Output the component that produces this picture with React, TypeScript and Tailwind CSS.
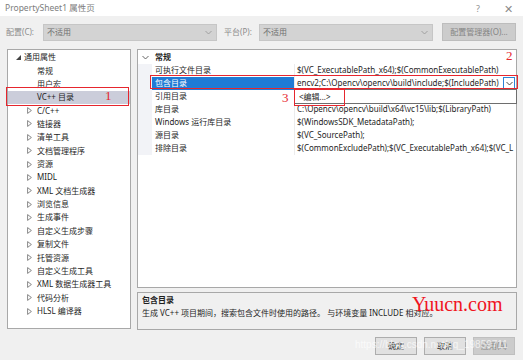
import React from "react";

const font = { fontFamily: "'Noto Sans', 'Noto Sans CJK SC', sans-serif" };

type TreeItem = { label: string; level: 0 | 1; arrow: "open" | "closed" | "none"; selected?: boolean };

const treeItems: TreeItem[] = [
  { label: "通用属性", level: 0, arrow: "open" },
  { label: "常规", level: 1, arrow: "none" },
  { label: "用户宏", level: 1, arrow: "none" },
  { label: "VC++ 目录", level: 1, arrow: "none", selected: true },
  { label: "C/C++", level: 1, arrow: "closed" },
  { label: "链接器", level: 1, arrow: "closed" },
  { label: "清单工具", level: 1, arrow: "closed" },
  { label: "文档管理程序", level: 1, arrow: "closed" },
  { label: "资源", level: 1, arrow: "closed" },
  { label: "MIDL", level: 1, arrow: "closed" },
  { label: "XML 文档生成器", level: 1, arrow: "closed" },
  { label: "浏览信息", level: 1, arrow: "closed" },
  { label: "生成事件", level: 1, arrow: "closed" },
  { label: "自定义生成步骤", level: 1, arrow: "closed" },
  { label: "复制文件", level: 1, arrow: "closed" },
  { label: "托管资源", level: 1, arrow: "closed" },
  { label: "自定义生成工具", level: 1, arrow: "closed" },
  { label: "XML 数据生成器工具", level: 1, arrow: "closed" },
  { label: "代码分析", level: 1, arrow: "closed" },
  { label: "HLSL 编译器", level: 1, arrow: "closed" },
];

// 引用目录's value sits under the open dropdown, so it is left blank here
const props = [
  { name: "可执行文件目录", value: "$(VC_ExecutablePath_x64);$(CommonExecutablePath)" },
  { name: "包含目录", value: "encv2;C:\\Opencv\\opencv\\build\\include;$(IncludePath)", selected: true },
  { name: "引用目录", value: "" },
  { name: "库目录", value: "C:\\Opencv\\opencv\\build\\x64\\vc15\\lib;$(LibraryPath)" },
  { name: "Windows 运行库目录", value: "$(WindowsSDK_MetadataPath);" },
  { name: "源目录", value: "$(VC_SourcePath);" },
  { name: "排除目录", value: "$(CommonExcludePath);$(VC_ExecutablePath_x64);$(VC_L" },
];

const Chevron = ({ color = "#8a8a8a" }: { color?: string }) => (
  <svg width="7" height="5" viewBox="0 0 7 5">
    <path d="M0.5 1 L3.5 4 L6.5 1" fill="none" stroke={color} strokeWidth="0.9" />
  </svg>
);

const App = () => {
  return (
    <div className="relative w-[523px] h-[360px] overflow-hidden bg-[#f0f0f0] text-[8px] leading-none text-[#1e1e1e]" style={font}>
      {/* title bar */}
      <div className="h-[16px] bg-white flex items-center pl-[5px] pr-[10px] text-[#7d7d7d]">
        <span className="text-[8.5px]">PropertySheet1 属性页</span>
        <span className="ml-auto text-[9px] text-[#909090]">?</span>
        <span className="ml-[24px] text-[11px] font-light text-[#8a8a8a]">✕</span>
      </div>

      {/* config row */}
      <div className="mt-[7px] h-[18px] flex items-center text-[#8b8b8b]">
        <span className="ml-[6px] w-[37px]">配置(C):</span>
        <div className="w-[174px] h-[17px] bg-[#d3d3d3] border border-[#c6c6c6] flex items-center pl-[3px] pr-[4px] text-[#6f6f6f]">
          <span>不适用</span>
          <span className="ml-auto"><Chevron color="#9a9a9a" /></span>
        </div>
        <span className="ml-[7px] w-[35px]">平台(P):</span>
        <div className="w-[174px] h-[17px] bg-[#d3d3d3] border border-[#c6c6c6] flex items-center pl-[3px] pr-[4px] text-[#6f6f6f]">
          <span>不适用</span>
          <span className="ml-auto"><Chevron color="#9a9a9a" /></span>
        </div>
        <div className="ml-[9px] w-[74px] h-[18px] bg-[#cccccc] border border-[#bdbdbd] flex items-center justify-center text-[#858585]">
          配置管理器(O)...
        </div>
      </div>

      {/* main area */}
      <div className="mt-[8px] flex h-[281px]">
        {/* tree */}
        <div className="ml-[7px] w-[124px] h-[280px] bg-white border border-[#a8a8a8] pt-[0.5px]">
          {treeItems.map((t) => (
            <div
              key={t.label}
              className={`relative h-[13.37px] flex items-center ${t.selected ? "bg-[#cbcdda]" : ""}`}
            >
              {t.arrow === "open" && (
                <svg className="absolute left-[8px]" width="5" height="5" viewBox="0 0 5 5">
                  <path d="M5 0 L5 5 L0 5 Z" fill="#444" />
                </svg>
              )}
              {t.arrow === "closed" && (
                <svg className="absolute left-[19px]" width="5" height="7" viewBox="0 0 5 7">
                  <path d="M0.6 0.6 L4.4 3.5 L0.6 6.4 Z" fill="none" stroke="#6a6a6a" strokeWidth="0.8" />
                </svg>
              )}
              <span className={t.level === 0 ? "ml-[16px]" : "ml-[29px]"}>{t.label}</span>
            </div>
          ))}
        </div>

        {/* right column */}
        <div className="ml-[6px] w-[380px] flex flex-col gap-[4px]">
          <div className="h-[239px] bg-white border border-[#a8a8a8] overflow-hidden pt-[0.5px]">
            <div className="h-[13px] flex items-center">
              <span className="w-[14px] flex justify-center"><Chevron color="#555" /></span>
              <span className="ml-[3px] font-bold">常规</span>
            </div>
            {props.map((p) => (
              <div key={p.name} className="h-[13px] flex">
                <div className="w-[14px] bg-[#f2f3f7]" />
                <div
                  className={`w-[143px] flex items-center pl-[3px] border-r border-[#ececec] ${
                    p.selected ? "bg-[#1f7bd5] text-white" : ""
                  }`}
                >
                  {p.name}
                </div>
                <div className="flex-1 flex items-center pl-[2px] whitespace-nowrap overflow-hidden">
                  <span>{p.value}</span>
                  {p.selected && (
                    <span className="ml-auto mr-[1px] w-[12px] h-[12px] border border-[#2a84d8] bg-white flex items-center justify-center">
                      <Chevron color="#333" />
                    </span>
                  )}
                </div>
              </div>
            ))}
          </div>

          {/* description */}
          <div className="h-[38px] border border-[#a8a8a8] bg-[#f0f0f0] pl-[4px] pt-[3px] flex flex-col gap-[5px]">
            <span className="font-bold">包含目录</span>
            <span>生成 VC++ 项目期间，搜索包含文件时使用的路径。 与环境变量 INCLUDE 相对应。</span>
          </div>
        </div>
      </div>

      {/* buttons */}
      <div className="mt-[7px] flex justify-end gap-[7px] pr-[8px]">
        <div className="w-[42px] h-[18px] bg-[#e1e1e1] border border-[#adadad] flex items-center justify-center">确定</div>
        <div className="w-[42px] h-[18px] bg-[#e1e1e1] border border-[#adadad] flex items-center justify-center">取消</div>
        <div className="w-[42px] h-[18px] bg-[#cccccc] border border-[#bfbfbf] flex items-center justify-center text-[#8a8a8a]">应用(A)</div>
      </div>

      {/* dropdown list */}
      <div className="absolute left-[294px] top-[89px] w-[223px] h-[15px] bg-white border border-[#6e6e6e] flex items-center pl-[4px]">
        &lt;编辑...&gt;
      </div>

      {/* red annotations */}
      <div className="absolute left-[6px] top-[87px] w-[123px] h-[19px] border-[1.5px] border-[#e6262e]" />
      <span className="absolute left-[105px] top-[89px] text-[13px] text-[#e6262e]" style={{ fontFamily: "'Liberation Serif', serif" }}>1</span>
      <div className="absolute left-[150px] top-[75px] w-[368px] h-[14px] border-[1.5px] border-[#e6262e]" />
      <span className="absolute left-[506px] top-[49px] text-[13px] text-[#e6262e]" style={{ fontFamily: "'Liberation Serif', serif" }}>2</span>
      <div className="absolute left-[294px] top-[89px] w-[51px] h-[17px] border-[1.5px] border-[#e6262e]" />
      <span className="absolute left-[282px] top-[91px] text-[13px] text-[#e6262e]" style={{ fontFamily: "'Liberation Serif', serif" }}>3</span>

      {/* watermarks */}
      <span className="absolute left-[412px] top-[294px] text-[20px] text-[#f0141e]" style={{ fontFamily: "'Liberation Serif', serif" }}>
        Yuucn.com
      </span>
      <span className="absolute left-[355px] top-[340px] text-[10px] text-white/70 whitespace-nowrap" style={{ fontFamily: "'Liberation Sans', sans-serif" }}>
        https://blog.csdn.net/qq_19859711
      </span>
    </div>
  );
};

export default App;
